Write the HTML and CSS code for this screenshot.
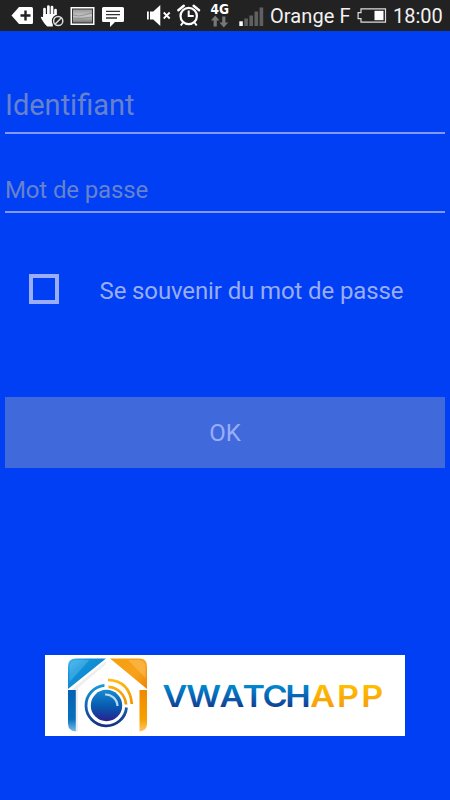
FILE: index.html
```html
<!DOCTYPE html>
<html lang="fr">
<head>
<meta charset="utf-8">
<title>VWatchApp</title>
<link rel="stylesheet" href="styles.css">
</head>
<body>
<header class="status">
  <svg class="icon" width="26" height="31" viewBox="10 0 26 31"><path d="M11.5 15.5 19 7h12.5q1.500 0 1.500 1.500v14q0 1.500-1.500 1.500H19z" fill="#fff"/><path d="M25.500 10.500v10M20.500 15.500h10" stroke="#222" stroke-width="2.400"/></svg>
  <svg class="icon" width="31" height="31" viewBox="36 0 31 31"><path d="M44.500 17V9M48.400 16V6.500M52 16V7M55.500 17V10" stroke="#fff" stroke-width="2.700" stroke-linecap="round"/><path d="M43.200 14h13.600v4l-4 2v6.500h-5.500C44 24 42 19.500 40.800 17.500q.5-1.500 2.400-.3z" fill="#fff"/><circle cx="58.200" cy="21" r="6.400" fill="#222"/><circle cx="58.200" cy="21" r="4.600" fill="none" stroke="#ddd" stroke-width="1.500"/><path d="m55 24.200 6.400-6.400" stroke="#ddd" stroke-width="1.500"/></svg>
  <svg class="icon" width="31" height="31" viewBox="67 0 31 31"><defs><linearGradient id="photo" x2="0" y2="1"><stop stop-color="#999"/><stop offset=".5" stop-color="#c8c8c8"/><stop offset="1" stop-color="#777"/></linearGradient></defs><path d="M70.500 7h24v18h-24z" fill="#fff"/><path d="M72 8.500h21v15H72z" fill="#333"/><path d="M73 9.500h19v13H73z" fill="url(#photo)"/><path d="m73 15 6 1 5-1 8-2m-19 5 8 .5 11-1.500" fill="none" stroke="#888" stroke-width=".8"/></svg>
  <svg class="icon" width="47" height="31" viewBox="98 0 47 31"><path d="M103.500 7h19q1.500 0 1.500 1.500v12q0 1.500-1.500 1.500H115l-5 5v-5h-6.500q-1.500 0-1.500-1.500v-12q0-1.500 1.500-1.500z" fill="#fff"/><path d="M106 11.300h14M106 14.600h14M106 18h11" stroke="#333" stroke-width="1.300"/></svg>
  <svg class="icon" width="30" height="31" viewBox="145 0 30 31"><path d="M147 11.500h1.800v8H147zM150 11.500h3.300l7-6.500v21l-7-6.500H150z" fill="#fff"/><path d="m163.700 12.500 6 6m0-6-6 6" stroke="#fff" stroke-width="1.800"/></svg>
  <svg class="icon" width="31" height="31" viewBox="175 0 31 31"><circle cx="188.700" cy="16" r="8.200" fill="none" stroke="#fff" stroke-width="2.200"/><path d="M188.700 10.500V16h5M183 22.500l-2.200 3M194.500 22.500l2.200 3" fill="none" stroke="#fff" stroke-width="2"/><path d="m178.300 10.200 5.500-4.500M193.600 5.700l5.500 4.500" stroke="#fff" stroke-width="2.400" stroke-linecap="round"/></svg>
  <svg class="icon" width="31" height="31" viewBox="206 0 31 31"><text class="network" x="210.500" y="13.500" textLength="18.500" lengthAdjust="spacingAndGlyphs">4G</text><path d="m215.200 15.500 4.300 5h-2.700v6h-3.200v-6h-2.700zM223.800 27.500l-4.400-5h2.800v-6h3.200v6h2.800z" fill="#777"/></svg>
  <svg class="icon" width="33" height="31" viewBox="237 0 33 31"><path d="M239.300 21.300h3.500v4.700h-3.500z" fill="#fff"/><path d="M244.300 18.500h3.600V26h-3.600zM249.400 15.500h3.600V26h-3.600zM254.500 11.500h3.600V26h-3.600zM259.600 7.500h3.600V26h-3.600z" fill="#606060"/></svg>
  <span class="carrier">Orange F</span>
  <svg class="icon" width="36" height="31" viewBox="357 0 36 31"><path d="M361 8.900h24.500v13.200H361v-3.500h-2.900v-6H361z" fill="none" stroke="#ddd" stroke-width="1.200"/><path d="M374.500 10.800h9v9.400h-9z" fill="#fff"/></svg>
  <span class="clock">18:00</span>
</header>
<main class="login">
  <div class="field field-id">Identifiant</div>
  <div class="field field-pass">Mot de passe</div>
  <label class="remember"><span class="box"></span><span class="remember-text">Se souvenir du mot de passe</span></label>
  <button class="ok">OK</button>
  <div class="brand">
    <svg width="360" height="81" viewBox="45 655 360 81">
      <defs>
        <linearGradient id="roofBlue" x2="1" y2="1"><stop stop-color="#49b8ee"/><stop offset=".3" stop-color="#1191d8"/><stop offset="1" stop-color="#087bc4"/></linearGradient>
        <linearGradient id="wallBlue" x2="0" y2="1"><stop stop-color="#0561b5"/><stop offset=".7" stop-color="#0870bd"/><stop offset="1" stop-color="#76bce8"/></linearGradient>
        <linearGradient id="roofOrange" x2="1" y2="1"><stop stop-color="#f5a00b"/><stop offset=".6" stop-color="#f7a21b"/><stop offset="1" stop-color="#ef8400"/></linearGradient>
        <linearGradient id="wallOrange" x2="0" y2="1"><stop stop-color="#f08a00"/><stop offset=".7" stop-color="#f6a000"/><stop offset="1" stop-color="#ffc766"/></linearGradient>
        <linearGradient id="lens" x2="0" y2="1"><stop stop-color="#168bd0"/><stop offset=".55" stop-color="#0858ae"/><stop offset="1" stop-color="#29218c"/></linearGradient>
        <linearGradient id="ring" x2="0" y2="1"><stop stop-color="#149bdc"/><stop offset="1" stop-color="#163087"/></linearGradient>
        <linearGradient id="arc" x2="0" y2="1"><stop stop-color="#ffbd16"/><stop offset="1" stop-color="#f09100"/></linearGradient>
        <linearGradient id="wordBlue" gradientUnits="userSpaceOnUse" x1="0" x2="0" y1="685" y2="708"><stop stop-color="#008bd2"/><stop offset="1" stop-color="#123b91"/></linearGradient>
        <linearGradient id="wordOrange" gradientUnits="userSpaceOnUse" x1="0" x2="0" y1="685" y2="708"><stop stop-color="#ffbf00"/><stop offset="1" stop-color="#f79b0b"/></linearGradient>
      </defs>
      <path d="m70 691 36-30v3l-28 24v43.500h-2z" fill="#eee"/>
      <path d="M68 689v-22.500q0-8 8-8h30z" fill="url(#roofBlue)"/>
      <path d="M69.500 682v-14q0-8 8-8h12z" fill="#7bcff4" opacity=".35"/>
      <path d="M68 690h7.800v41.500Q68 731 68 723.500z" fill="url(#wallBlue)"/>
      <path d="M110 658.500h29.500q7.500 0 7.500 8V689z" fill="url(#roofOrange)"/>
      <path d="M128 660h9.500q8 0 8 8v10z" fill="#ffd084" opacity=".35"/>
      <path d="M139.500 690h7.500v33.500q0 7.500-7.500 8z" fill="url(#wallOrange)"/>
      <circle cx="106.500" cy="705.500" r="15.700" fill="url(#lens)"/>
      <path d="M104.500 685.300A20.300 20.300 0 1 0 126.500 707.500" fill="none" stroke="url(#ring)" stroke-width="2.800"/>
      <path d="M108.500 686.800A19 19 0 0 1 126 704.500M108 679.800Q130 681 131.800 704" fill="none" stroke="url(#arc)" stroke-width="2.700"/>
      <path d="M105 694.500A12 12 0 0 1 117.500 706" fill="none" stroke="#b8dcf4" stroke-width="2.200"/>
      <g transform="scale(1.12 1)">
        <text class="word" x="145.100 166.300 196 216.500 234.300 254.800" y="707" fill="url(#wordBlue)">VWATCH</text>
        <text class="word" x="277 300.800 322.500" y="707" fill="url(#wordOrange)">APP</text>
      </g>
    </svg>
  </div>
</main>
</body>
</html>
```
FILE: styles.css
```css
* { box-sizing: border-box; }
body {
  margin: 0;
  width: 450px;
  height: 800px;
  overflow: hidden;
  background: #003ff3;
  font-family: Roboto, sans-serif;
}
.status {
  display: flex;
  height: 31px;
  padding-left: 10px;
  background: #222;
  color: #f2f2f2;
  font-size: 20px;
  line-height: 33px;
  white-space: nowrap;
}
.icon { display: block; flex: none; }
.carrier { flex: none; width: 87px; letter-spacing: 0.1px; }
.clock { flex: none; }
.network { font: bold 14px "DejaVu Sans", sans-serif; fill: #fff; }
.login { display: flex; flex-direction: column; padding: 0 5px; }
.field {
  color: #6782cd;
  border-bottom: 2px solid #8299f8;
}
.field-id {
  height: 103px;
  padding: 57px 0 0 0;
  font-size: 29px;
  line-height: 34px;
}
.field-pass {
  height: 79px;
  padding: 42px 0 0 0;
  font-size: 24px;
  line-height: 28px;
  letter-spacing: -0.14px;
}
.remember {
  display: flex;
  align-items: center;
  height: 30px;
  margin: 61px 0 0 24px;
}
.box { width: 30px; height: 30px; border: 4px solid #9badf9; }
.remember-text {
  margin-left: 40.500px;
  padding-top: 3px;
  color: #99adf9;
  font-size: 24px;
  line-height: 28px;
  letter-spacing: -0.12px;
  white-space: nowrap;
}
.ok {
  height: 71px;
  margin-top: 93.400px;
  padding: 0;
  border: 0;
  background: #406adc;
  color: #99adf9;
  font: 24px Roboto, sans-serif;
}
.brand { width: 360px; height: 81px; margin: 186.600px auto 0; background: #fff; }
.brand svg { display: block; }
.word { font: 600 30.500px Inter, sans-serif; }
```
